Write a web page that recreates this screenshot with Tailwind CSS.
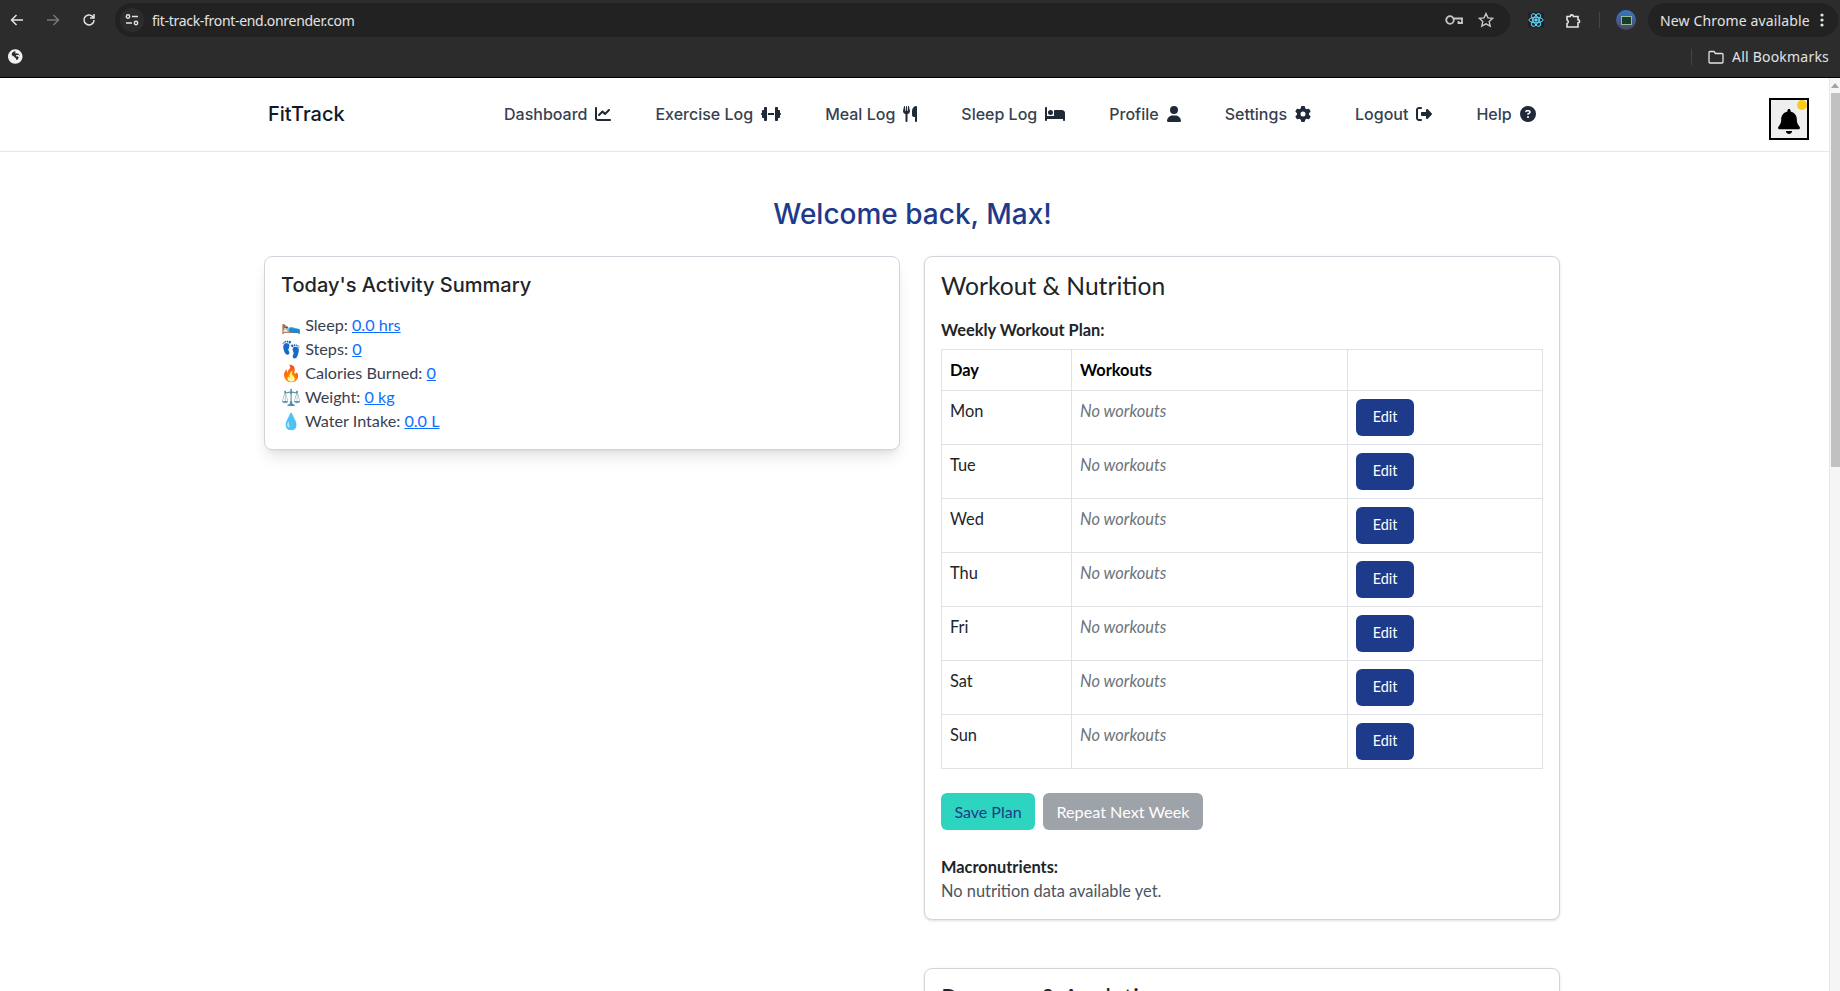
<!DOCTYPE html>
<html lang="en">
  <head>
    <meta charset="UTF-8" />
    <meta name="viewport" content="width=device-width, initial-scale=1.0" />
    <title>FitTrack</title>
    <script src="https://cdn.jsdelivr.net/npm/@tailwindcss/browser@4"></script>
  </head>
  <body class="h-screen overflow-hidden flex flex-col bg-white font-['Lato',sans-serif]">
    <!-- browser chrome -->
    <div class="h-[78px] shrink-0 bg-[#2c2c2c] border-b border-black text-[#e3e3e3] font-['Noto_Sans',sans-serif]">
      <div class="h-[40px] flex items-center pl-[9px] pr-[2px]">
        <svg class="w-[16px] h-[16px]" viewBox="0 0 16 16" fill="none" stroke="#e3e3e3" stroke-width="1.5"><path d="M14 8H2.500M7.500 3l-5 5 5 5"/></svg>
        <svg class="w-[16px] h-[16px] ml-[20px]" viewBox="0 0 16 16" fill="none" stroke="#777" stroke-width="1.5"><path d="M2 8h11.500M8.500 3l5 5-5 5"/></svg>
        <svg class="w-[16px] h-[16px] ml-[20px]" viewBox="0 0 16 16" fill="none" stroke="#e3e3e3" stroke-width="1.5"><path d="M13 8a5 5 0 1 1-1.500-3.600L13 6M13 2v4H9"/></svg>
        <div class="ml-[18px] flex-1 h-[34px] rounded-full bg-[#222222] flex items-center pl-[5px] pr-[16px]">
          <div class="w-[24px] h-[24px] rounded-full bg-[#2c2c2c] flex items-center justify-center">
            <svg class="w-[14px] h-[14px]" viewBox="0 0 14 14" fill="none" stroke="#e3e3e3" stroke-width="1.4"><circle cx="3" cy="3.500" r="1.700"/><path d="M7 3.500h6M1 10h6"/><circle cx="11" cy="10" r="1.700"/></svg>
          </div>
          <span class="ml-[8px] text-[14px] tracking-[-0.022em] text-[#e3e3e3]">fit-track-front-end.onrender.com</span>
          <svg class="w-[18px] h-[12px] ml-auto" viewBox="0 0 18 12" fill="none" stroke="#c7c7c7" stroke-width="1.8"><circle cx="5" cy="6" r="3.800"/><path d="M9 4.500h8V9h-3.500V7"/></svg>
          <svg class="w-[16px] h-[16px] ml-[15px]" viewBox="0 0 16 16" fill="none" stroke="#c7c7c7" stroke-width="1.4"><path d="M8 1.600l2 4.300 4.600.5-3.400 3.200 1 4.600L8 11.800l-4.200 2.400 1-4.600L1.400 6.400 6 5.900z"/></svg>
        </div>
        <div class="ml-[18px] w-[16px] h-[16px] bg-[#20232a] flex items-center justify-center">
          <svg class="w-[16px] h-[16px]" viewBox="0 0 16 16" fill="none" stroke="#61dafb" stroke-width="1"><ellipse cx="8" cy="8" rx="7" ry="2.800"/><ellipse cx="8" cy="8" rx="7" ry="2.800" transform="rotate(60 8 8)"/><ellipse cx="8" cy="8" rx="7" ry="2.800" transform="rotate(120 8 8)"/><circle cx="8" cy="8" r="1.200" fill="#61dafb"/></svg>
        </div>
        <svg class="w-[17px] h-[17px] ml-[21px]" viewBox="0 0 17 17" fill="none" stroke="#e3e3e3" stroke-width="1.6"><path d="M2 4.500h3.200a1.600 1.600 0 0 1 3.200 0H13v3.200a1.600 1.600 0 0 1 0 3.200V15H2v-3.400a1.900 1.900 0 0 0 0-3.600z"/></svg>
        <div class="w-px h-[16px] bg-[#444444] ml-[17px]"></div>
        <div class="ml-[16px] w-[20px] h-[20px] rounded-full bg-gradient-to-b from-[#2f78c8] to-[#4a4560] flex items-center justify-center overflow-hidden">
          <div class="w-[11px] h-[9px] bg-[#1c3a2a] border border-[#8fbf8f]"></div>
        </div>
        <div class="ml-[12px] h-[34px] w-[190px] rounded-full bg-[#222222] flex items-center pl-[12px] pr-[14px] text-[14px]">
          <span class="whitespace-nowrap tracking-[0.01em]">New Chrome available</span>
          <svg class="w-[4px] h-[14px] ml-auto" viewBox="0 0 4 14" fill="#e3e3e3"><circle cx="2" cy="2" r="1.600"/><circle cx="2" cy="7" r="1.600"/><circle cx="2" cy="12" r="1.600"/></svg>
        </div>
      </div>
      <div class="h-[37px] pb-[4px] flex items-center pl-[8px] pr-[11px]">
        <svg class="w-[15px] h-[15px]" viewBox="0 0 512 512" fill="#f1f1f1"><path d="M248 8C111 8 0 119 0 256s111 248 248 248 248-111 248-248S385 8 248 8zm160 215c-8 5-20 6-26-2-7-10-8-22-20-26l-29-2c-12 2-13 22-24 24-11 3-16-10-27-10-17 3-16 27-5 37 9 8 21 11 32 7 12-5 23 3 32 11 11 9 22 14 25 30 1 12-8 23-16 32-13 14-22 30-35 44-8 8-20 8-29 2-8-7-8-21-12-31-4-11-1-24-11-33-10-10-22-12-33-20-12-9-11-24-22-34-11-9-27-6-39-14-15-9-26-24-37-37-8-9-8-20-4-31 11-46 50-83 96-94 11-2 20 5 28 11 8 7 16 16 7 26-7 8-19 12-25 21-4 7 2 15 9 16 11 2 16-9 26-11 9-2 21 2 25 11 3 7 12 11 19 8l17-4c16 2 40 4 49 20 4 7 2 15-6 21z"/></svg>
        <div class="ml-auto w-px h-[16px] bg-[#444444]"></div>
        <svg class="w-[16px] h-[14px] ml-[16px]" viewBox="0 0 16 14" fill="none" stroke="#e3e3e3" stroke-width="1.3"><path d="M1 2.500a1 1 0 0 1 1-1h4l1.500 2H14a1 1 0 0 1 1 1v7.500a1 1 0 0 1-1 1H2a1 1 0 0 1-1-1z"/></svg>
        <span class="ml-[8px] text-[14px] tracking-[0.015em]">All Bookmarks</span>
      </div>
    </div>

    <div class="flex-1 min-h-0 flex">
      <div class="flex-1 min-w-0 overflow-hidden">
        <!-- navbar -->
        <nav class="relative h-[74px] border-b border-[#e5e7eb] flex items-center pl-[268px] pb-[1px] font-['Inter',sans-serif]">
          <span class="text-[20px] font-medium text-[#111827] w-[236px]">FitTrack</span>
          <div class="flex items-center gap-[44px] text-[16px] font-medium text-[#374151]">
            <a class="flex items-center gap-[8px]">Dashboard
              <svg class="w-[16px] h-[16px]" viewBox="0 0 512 512" fill="#1f2937"><path d="M64 64c0-17.700-14.300-32-32-32S0 46.300 0 64V400c0 44.200 35.800 80 80 80H480c17.700 0 32-14.300 32-32s-14.300-32-32-32H80c-8.800 0-16-7.200-16-16V64zm406.600 86.600c12.500-12.500 12.500-32.800 0-45.300s-32.800-12.500-45.300 0L320 210.700l-57.400-57.400c-12.500-12.500-32.800-12.500-45.300 0l-112 112c-12.500 12.500-12.500 32.800 0 45.300s32.800 12.500 45.300 0L240 221.300l57.400 57.400c12.500 12.500 32.800 12.500 45.300 0l128-128z"/></svg>
            </a>
            <a class="flex items-center gap-[8px]">Exercise Log
              <svg class="w-[20px] h-[16px]" viewBox="0 0 640 512" fill="#1f2937"><path d="M96 64c0-17.700 14.300-32 32-32h32c17.700 0 32 14.300 32 32V224v64V448c0 17.700-14.300 32-32 32H128c-17.700 0-32-14.300-32-32V384H64c-17.700 0-32-14.300-32-32V288c-17.700 0-32-14.300-32-32s14.300-32 32-32V160c0-17.700 14.300-32 32-32H96V64zm448 0v64h32c17.700 0 32 14.300 32 32v64c17.700 0 32 14.300 32 32s-14.300 32-32 32v64c0 17.700-14.300 32-32 32H544v64c0 17.700-14.300 32-32 32H480c-17.700 0-32-14.300-32-32V288 224 64c0-17.700 14.300-32 32-32h32c17.700 0 32 14.300 32 32zM416 224v64H224V224H416z"/></svg>
            </a>
            <a class="flex items-center gap-[8px]">Meal Log
              <svg class="w-[14px] h-[16px]" viewBox="0 0 448 512" fill="#1f2937"><path d="M416 0C400 0 288 32 288 176V288c0 35.300 28.700 64 64 64h32V480c0 17.700 14.300 32 32 32s32-14.300 32-32V352 240 32c0-17.700-14.300-32-32-32zM64 16C64 7.800 57.900 1 49.700 .1S34.200 4.600 32.400 12.500L2.100 148.800C.7 155.100 0 161.500 0 167.900c0 45.900 35.100 83.600 80 87.700V480c0 17.700 14.300 32 32 32s32-14.300 32-32V255.600c44.900-4.100 80-41.800 80-87.700c0-6.400-.7-12.800-2.100-19.100L191.600 12.500c-1.800-8-9.300-13.300-17.400-12.400S160 7.800 160 16V150.200c0 5.400-4.400 9.800-9.800 9.800c-5.100 0-9.300-3.900-9.800-9L127.900 14.600C127.200 6.300 120.300 0 112 0s-15.200 6.300-15.900 14.600L83.700 151c-.5 5.100-4.700 9-9.800 9c-5.400 0-9.800-4.400-9.800-9.800V16z"/></svg>
            </a>
            <a class="flex items-center gap-[8px]">Sleep Log
              <svg class="w-[20px] h-[16px]" viewBox="0 0 640 512" fill="#1f2937"><path d="M32 32c17.700 0 32 14.300 32 32V320H288V160c0-17.700 14.300-32 32-32H544c53 0 96 43 96 96V448c0 17.700-14.300 32-32 32s-32-14.300-32-32V416H352 320 64v32c0 17.700-14.300 32-32 32s-32-14.300-32-32V64C0 46.300 14.300 32 32 32zm144 96a80 80 0 1 1 0 160 80 80 0 1 1 0-160z"/></svg>
            </a>
            <a class="flex items-center gap-[8px]">Profile
              <svg class="w-[14px] h-[16px]" viewBox="0 0 448 512" fill="#1f2937"><path d="M224 256A128 128 0 1 0 224 0a128 128 0 1 0 0 256zm-45.700 48C79.800 304 0 383.800 0 482.300C0 498.700 13.300 512 29.700 512H418.300c16.400 0 29.700-13.300 29.700-29.700C448 383.800 368.200 304 269.700 304H178.300z"/></svg>
            </a>
            <a class="flex items-center gap-[8px]">Settings
              <svg class="w-[16px] h-[16px]" viewBox="0 0 512 512" fill="#1f2937"><path d="M495.900 166.600c3.200 8.700 .5 18.400-6.400 24.600l-43.300 39.400c1.100 8.300 1.700 16.800 1.700 25.400s-.6 17.100-1.700 25.400l43.300 39.400c6.900 6.200 9.600 15.900 6.400 24.600c-4.400 11.900-9.700 23.300-15.800 34.300l-4.700 8.100c-6.600 11-14 21.400-22.100 31.200c-5.900 7.200-15.700 9.600-24.500 6.800l-55.700-17.700c-13.400 10.300-28.200 18.900-44 25.400l-12.500 57.100c-2 9.100-9 16.300-18.200 17.800c-13.800 2.300-28 3.500-42.500 3.500s-28.700-1.200-42.500-3.500c-9.200-1.500-16.200-8.700-18.200-17.800l-12.500-57.100c-15.800-6.500-30.600-15.100-44-25.400L83.100 425.900c-8.800 2.800-18.600 .3-24.500-6.800c-8.100-9.800-15.500-20.200-22.100-31.200l-4.700-8.100c-6.100-11-11.400-22.400-15.800-34.300c-3.200-8.700-.5-18.400 6.400-24.600l43.300-39.400C64.600 273.100 64 264.600 64 256s.6-17.100 1.700-25.400L22.400 191.200c-6.900-6.200-9.600-15.900-6.400-24.600c4.400-11.900 9.700-23.300 15.800-34.300l4.700-8.100c6.600-11 14-21.400 22.100-31.200c5.900-7.200 15.700-9.600 24.500-6.800l55.700 17.700c13.400-10.300 28.200-18.900 44-25.400l12.500-57.100c2-9.100 9-16.300 18.200-17.800C227.300 1.200 241.500 0 256 0s28.700 1.200 42.500 3.500c9.200 1.500 16.200 8.700 18.200 17.800l12.500 57.100c15.800 6.500 30.600 15.100 44 25.400l55.700-17.700c8.800-2.800 18.600-.3 24.500 6.800c8.100 9.800 15.500 20.200 22.100 31.200l4.700 8.100c6.100 11 11.400 22.400 15.800 34.300zM256 336a80 80 0 1 0 0-160 80 80 0 1 0 0 160z"/></svg>
            </a>
            <a class="flex items-center gap-[8px]">Logout
              <svg class="w-[16px] h-[16px]" viewBox="0 0 512 512" fill="#1f2937"><path d="M377.900 105.900L500.700 228.700c7.200 7.200 11.300 17.100 11.300 27.300s-4.100 20.100-11.300 27.300L377.900 406.100c-6.400 6.400-15 9.900-24 9.900c-18.700 0-33.900-15.200-33.900-33.900l0-62.100-128 0c-17.700 0-32-14.300-32-32l0-64c0-17.700 14.300-32 32-32l128 0 0-62.100c0-18.700 15.200-33.900 33.900-33.900c9 0 17.600 3.500 24 9.900zM160 96L96 96c-17.700 0-32 14.300-32 32l0 256c0 17.700 14.300 32 32 32l64 0c17.700 0 32 14.300 32 32s-14.300 32-32 32l-64 0c-53 0-96-43-96-96L0 128C0 75 43 32 96 32l64 0c17.700 0 32 14.300 32 32s-14.300 32-32 32z"/></svg>
            </a>
            <a class="flex items-center gap-[8px]">Help
              <svg class="w-[16px] h-[16px]" viewBox="0 0 512 512" fill="#1f2937"><path d="M256 512A256 256 0 1 0 256 0a256 256 0 1 0 0 512zM169.800 165.300c7.900-22.300 29.100-37.300 52.800-37.300h58.300c34.900 0 63.100 28.300 63.100 63.100c0 22.600-12.100 43.500-31.700 54.800L280 264.400c-.2 13-10.900 23.600-24 23.600c-13.300 0-24-10.700-24-24V250.500c0-8.600 4.600-16.500 12.100-20.800l44.300-25.400c4.700-2.700 7.600-7.700 7.600-13.100c0-8.400-6.800-15.100-15.100-15.100H222.600c-3.400 0-6.400 2.100-7.500 5.300l-.4 1.200c-4.400 12.500-18.200 19-30.600 14.600s-19-18.200-14.600-30.600l.4-1.200zM224 352a32 32 0 1 1 64 0 32 32 0 1 1 -64 0z"/></svg>
            </a>
          </div>
          <!-- notification bell -->
          <button class="absolute left-[1769px] top-[20px] w-[40px] h-[42px] border-2 border-black bg-[#efefef] flex items-center justify-center">
            <svg class="w-[22px] h-[25px] mt-[5px]" viewBox="0 0 448 512" fill="#000"><path d="M224 0c-17.700 0-32 14.300-32 32V51.200C119 66 64 130.600 64 208v18.800c0 47-17.300 92.400-48.500 127.600l-7.400 8.300c-8.400 9.400-10.400 22.900-5.300 34.400S19.400 416 32 416H416c12.600 0 24-7.400 29.200-18.900s3.100-25-5.300-34.400l-7.400-8.300C401.300 319.200 384 273.900 384 226.800V208c0-77.400-55-142-128-156.800V32c0-17.700-14.300-32-32-32zm45.300 493.300c12-12 18.700-28.300 18.700-45.300H224 160c0 17 6.700 33.300 18.700 45.300s28.300 18.700 45.300 18.700s33.300-6.700 45.300-18.700z"/></svg>
            <span class="absolute right-0 top-0 w-[10px] h-[10px] rounded-full bg-[#facc15]"></span>
          </button>
        </nav>

        <main class="pt-[44px]">
          <h1 class="text-center text-[28px] leading-[36px] font-medium text-[#1e3a8a] font-['Inter',sans-serif] pr-[4px]">Welcome back, Max!</h1>
          <div class="mt-[24px] ml-[264px] w-[1296px] grid grid-cols-2 gap-x-[24px] items-start">
            <!-- left column -->
            <section class="h-[194px] bg-white border border-[#d1d5db] rounded-[8px] shadow-lg p-[16px] text-[16.2px] leading-[24px] text-[#374151]">
              <h2 class="font-['Inter',sans-serif] text-[20px] leading-[24px] font-medium text-[#212529]">Today's Activity Summary</h2>
              <ul class="mt-[16px]">
                <li>🛌 Sleep: <a class="text-[#0d6efd] underline">0.0 hrs</a></li>
                <li>👣 Steps: <a class="text-[#0d6efd] underline">0</a></li>
                <li>🔥 Calories Burned: <a class="text-[#0d6efd] underline">0</a></li>
                <li>⚖️ Weight: <a class="text-[#0d6efd] underline">0 kg</a></li>
                <li>💧 Water Intake: <a class="text-[#0d6efd] underline">0.0 L</a></li>
              </ul>
            </section>
            <!-- right column -->
            <div class="flex flex-col gap-[48px]">
              <section class="h-[664px] bg-white border border-[#d1d5db] rounded-[8px] shadow p-[16px] text-[16.4px] leading-[24px] text-[#212529]">
                <h2 class="text-[24.6px] leading-[26px]">Workout &amp; Nutrition</h2>
                <h3 class="mt-[19px] font-bold">Weekly Workout Plan:</h3>
                <table class="mt-[7px] w-full border-collapse table-fixed">
                  <thead>
                    <tr class="h-[41px] text-left">
                      <th class="w-[130px] border border-[#dee2e6] px-[8px] pb-[1px] font-bold text-black">Day</th>
                      <th class="w-[276px] border border-[#dee2e6] px-[8px] pb-[1px] font-bold text-black">Workouts</th>
                      <th class="border border-[#dee2e6]"></th>
                    </tr>
                  </thead>
                  <tbody>
                    <tr class="h-[54px]"><td class="border border-[#dee2e6] px-[8px] pt-[8px] align-top">Mon</td><td class="border border-[#dee2e6] px-[8px] pt-[8px] align-top italic text-[#6c757d]">No workouts</td><td class="border border-[#dee2e6] px-[8px] align-middle"><button class="block w-[58px] h-[37px] pb-[1px] rounded-[6px] bg-[#1e3a8a] text-white text-[14.4px]">Edit</button></td></tr>
                    <tr class="h-[54px]"><td class="border border-[#dee2e6] px-[8px] pt-[8px] align-top">Tue</td><td class="border border-[#dee2e6] px-[8px] pt-[8px] align-top italic text-[#6c757d]">No workouts</td><td class="border border-[#dee2e6] px-[8px] align-middle"><button class="block w-[58px] h-[37px] pb-[1px] rounded-[6px] bg-[#1e3a8a] text-white text-[14.4px]">Edit</button></td></tr>
                    <tr class="h-[54px]"><td class="border border-[#dee2e6] px-[8px] pt-[8px] align-top">Wed</td><td class="border border-[#dee2e6] px-[8px] pt-[8px] align-top italic text-[#6c757d]">No workouts</td><td class="border border-[#dee2e6] px-[8px] align-middle"><button class="block w-[58px] h-[37px] pb-[1px] rounded-[6px] bg-[#1e3a8a] text-white text-[14.4px]">Edit</button></td></tr>
                    <tr class="h-[54px]"><td class="border border-[#dee2e6] px-[8px] pt-[8px] align-top">Thu</td><td class="border border-[#dee2e6] px-[8px] pt-[8px] align-top italic text-[#6c757d]">No workouts</td><td class="border border-[#dee2e6] px-[8px] align-middle"><button class="block w-[58px] h-[37px] pb-[1px] rounded-[6px] bg-[#1e3a8a] text-white text-[14.4px]">Edit</button></td></tr>
                    <tr class="h-[54px]"><td class="border border-[#dee2e6] px-[8px] pt-[8px] align-top">Fri</td><td class="border border-[#dee2e6] px-[8px] pt-[8px] align-top italic text-[#6c757d]">No workouts</td><td class="border border-[#dee2e6] px-[8px] align-middle"><button class="block w-[58px] h-[37px] pb-[1px] rounded-[6px] bg-[#1e3a8a] text-white text-[14.4px]">Edit</button></td></tr>
                    <tr class="h-[54px]"><td class="border border-[#dee2e6] px-[8px] pt-[8px] align-top">Sat</td><td class="border border-[#dee2e6] px-[8px] pt-[8px] align-top italic text-[#6c757d]">No workouts</td><td class="border border-[#dee2e6] px-[8px] align-middle"><button class="block w-[58px] h-[37px] pb-[1px] rounded-[6px] bg-[#1e3a8a] text-white text-[14.4px]">Edit</button></td></tr>
                    <tr class="h-[54px]"><td class="border border-[#dee2e6] px-[8px] pt-[8px] align-top">Sun</td><td class="border border-[#dee2e6] px-[8px] pt-[8px] align-top italic text-[#6c757d]">No workouts</td><td class="border border-[#dee2e6] px-[8px] align-middle"><button class="block w-[58px] h-[37px] pb-[1px] rounded-[6px] bg-[#1e3a8a] text-white text-[14.4px]">Edit</button></td></tr>
                  </tbody>
                </table>
                <div class="mt-[24px] flex gap-[8px]">
                  <button class="h-[37px] w-[94px] rounded-[6px] bg-[#2dd4bf] text-[#1e3a8a] text-[16px]">Save Plan</button>
                  <button class="h-[37px] w-[160px] rounded-[6px] bg-[#9ea2a9] text-white text-[16.2px]">Repeat Next Week</button>
                </div>
                <h3 class="mt-[25px] font-bold">Macronutrients:</h3>
                <p class="text-[#4b5563]">No nutrition data available yet.</p>
              </section>
              <section class="h-[200px] bg-white border border-[#d1d5db] rounded-[8px] shadow px-[16px] pt-[16px]">
                <h2 class="text-[24.6px] leading-[26px] text-[#212529]">Progress &amp; Analytics</h2>
              </section>
            </div>
          </div>
        </main>
      </div>
      <!-- scrollbar -->
      <div class="w-[11px] shrink-0 bg-[#f5f5f5] border-l border-[#e8e8e8] flex flex-col items-center">
        <div class="mt-[5px] w-0 h-0 border-x-[4px] border-x-transparent border-b-[5px] border-b-[#a3a3a3]"></div>
        <div class="mt-[5px] w-[9px] h-[374px] ml-[1px] bg-[#c1c1c1]"></div>
      </div>
    </div>
  </body>
</html>
